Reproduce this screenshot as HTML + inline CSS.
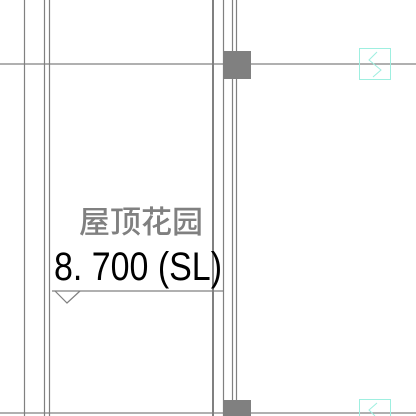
<html><body style="margin:0;width:416px;height:416px;background:#fff;position:relative;overflow:hidden">
<svg width="416" height="416" style="position:absolute;left:0;top:0">
<g stroke="#808080" fill="none">
<line x1="24.5" y1="0" x2="24.5" y2="416" stroke-width="1.2"/>
<line x1="44.5" y1="0" x2="44.5" y2="416" stroke-width="1.2"/>
<line x1="49.5" y1="0" x2="49.5" y2="416" stroke-width="1.2"/>
<line x1="213" y1="0" x2="213" y2="416" stroke-width="2"/>
<line x1="223.5" y1="0" x2="223.5" y2="416" stroke-width="1.2"/>
<line x1="232.5" y1="0" x2="232.5" y2="416" stroke-width="1.2"/>
<line x1="236.5" y1="0" x2="236.5" y2="416" stroke-width="1.2"/>
<line x1="0" y1="64" x2="416" y2="64" stroke-width="1.2"/>
<line x1="0" y1="413" x2="416" y2="413" stroke-width="1.2"/>
<line x1="52" y1="291" x2="223" y2="291" stroke-width="1.2"/>
<path d="M55 291 L67 303 L80 291" stroke-width="1.2"/>
</g>
<rect x="223" y="51" width="28" height="28" fill="#808080"/>
<rect x="223" y="400" width="28" height="16" fill="#808080"/>
<g stroke="#9eefe0" fill="none" stroke-width="1">
<rect x="359.5" y="48.5" width="31" height="31"/>
<path d="M377 52 L369 60 L381 70 L373 77"/>
<rect x="359.5" y="399.5" width="31" height="31"/>
<path d="M377 403 L369 410 L375 416"/>
</g>
<text x="79" y="233" font-family="'Noto Sans CJK SC',sans-serif" font-size="31" fill="#808080" font-weight="500">屋顶花园</text>
<text x="54" y="280" font-family="'Liberation Sans',sans-serif" font-size="40" fill="#000" textLength="168" lengthAdjust="spacingAndGlyphs">8. 700 (SL)</text>
</svg>
</body></html>
